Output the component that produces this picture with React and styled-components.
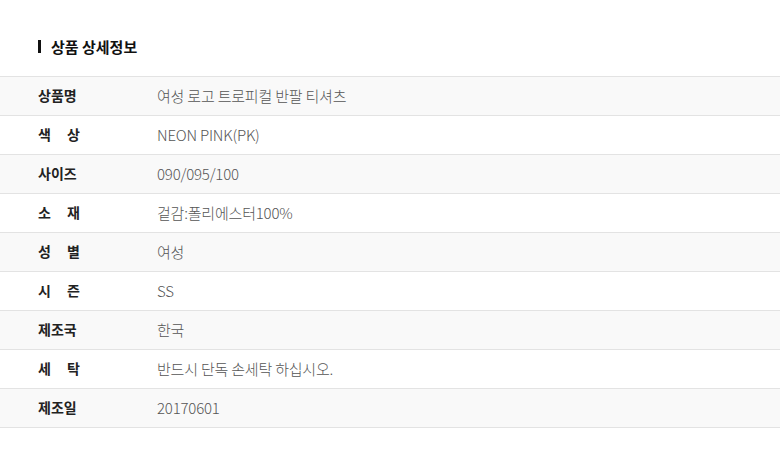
import styled, { createGlobalStyle } from "styled-components";

const GlobalStyle = createGlobalStyle`
  body {
    margin: 0;
    background: #fff;
    font-family: "Noto Sans CJK KR", "Noto Sans", sans-serif;
  }
`;

const Wrap = styled.section`
  width: 780px;
  padding-top: 38px;
`;

const Heading = styled.h2`
  display: flex;
  align-items: center;
  gap: 10px;
  margin: 0 0 22px 38px;
  height: 16px;
  font-size: 15px;
  font-weight: 700;
  color: #111;

  &::before {
    content: "";
    display: block;
    width: 3px;
    height: 13px;
    background: #111;
  }
`;

const Table = styled.div`
  border-bottom: 1px solid #e3e3e3;
`;

const Row = styled.div`
  display: flex;
  align-items: center;
  height: 38px;
  padding-bottom: 2px;
  box-sizing: border-box;
  height: 39px;
  border-top: 1px solid #e3e3e3;
  background: ${(p) => (p.$shade ? "#f9f9f9" : "#fff")};
`;

const Label = styled.div`
  width: 119px;
  padding-left: 38px;
  box-sizing: content-box;
  flex-shrink: 0;
`;

const LabelText = styled.span`
  display: block;
  width: 42px;
  font-size: 14px;
  font-weight: 700;
  color: #222;
  text-align: justify;
  text-align-last: justify;
  white-space: nowrap;
`;

const Value = styled.div`
  font-size: 15px;
  font-weight: 300;
  color: #555;
  letter-spacing: -0.2px;
`;

const rows = [
  ["상품명", "여성 로고 트로피컬 반팔 티셔츠"],
  ["색 상", "NEON PINK(PK)"],
  ["사이즈", "090/095/100"],
  ["소 재", "겉감:폴리에스터100%"],
  ["성 별", "여성"],
  ["시 즌", "SS"],
  ["제조국", "한국"],
  ["세 탁", "반드시 단독 손세탁 하십시오."],
  ["제조일", "20170601"],
];

export default function App() {
  return (
    <>
      <GlobalStyle />
      <Wrap>
        <Heading>상품 상세정보</Heading>
        <Table>
          {rows.map(([label, value], i) => (
            <Row key={label} $shade={i % 2 === 0}>
              <Label>
                <LabelText>{label}</LabelText>
              </Label>
              <Value>{value}</Value>
            </Row>
          ))}
        </Table>
      </Wrap>
    </>
  );
}
